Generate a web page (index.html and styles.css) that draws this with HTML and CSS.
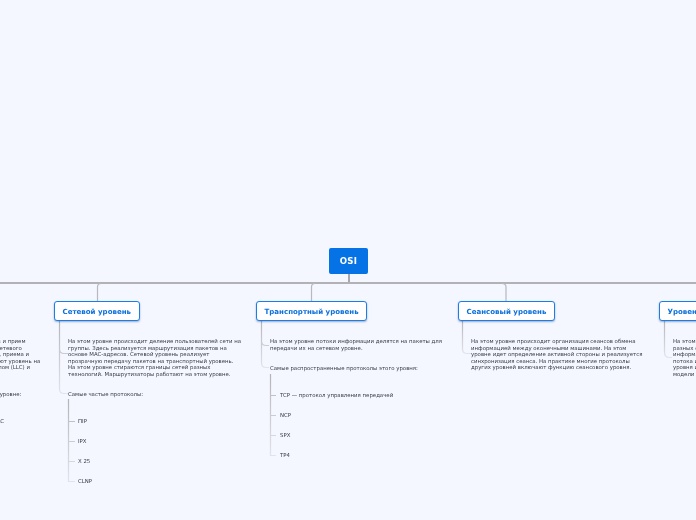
FILE: index.html
```html
<!DOCTYPE html>
<html lang="ru">
<head>
<meta charset="utf-8">
<title>OSI</title>
<link rel="stylesheet" href="styles.css">
</head>
<body>
<main class="map">
  <svg class="links" width="696" height="520" viewBox="0 0 696 520" aria-hidden="true">
    <defs>
      <linearGradient id="fade" x1="0" y1="0" x2="0" y2="1">
        <stop offset="0" stop-color="#b4b4b8"/>
        <stop offset="1" stop-color="#e2e3ea"/>
      </linearGradient>
    </defs>
    <path class="stem" d="M349 273V283"/>
    <path class="trunk" d="M0 283H696"/>
    <path class="drop" d="M97.500 301V287Q97.500 283.500 101 283.500"/>
    <path class="drop" d="M311.500 301V287Q311.500 283.500 315 283.500"/>
    <path class="drop" d="M506 301V287Q506 283.500 502 283.500"/>
    <path class="kid" d="M59.500 320V349Q59.500 353.500 64 353.500H68M59.500 320V389Q59.500 393.500 64 393.500H68"/>
    <path class="kid" d="M261.500 320V341Q261.500 345.500 266 345.500H269M261.500 320V363Q261.500 367.500 266 367.500H269"/>
    <path class="kid" d="M462.500 320V349Q462.500 353.500 467 353.500H471"/>
    <path class="kid" d="M664.500 320V352Q664.500 357.500 669 357.500H672"/>
    <path class="kid" d="M68.500 399V481.500H75M68.500 421.500H75M68.500 441.500H75M68.500 461.500H75"/>
    <path class="kid" d="M270.500 374V455.500H276M270.500 395.500H276M270.500 415.500H276M270.500 435.500H276"/>
  </svg>

  <div class="node root">OSI</div>
  <div class="node topic topic-net">Сетевой уровень</div>
  <div class="node topic topic-trans">Транспортный уровень</div>
  <div class="node topic topic-sess">Сеансовый уровень</div>
  <div class="node topic topic-pres">Уровень представления</div>

  <p class="note note-link">На этом уровне выполняется передача кадров и прием<br>кадров данных между устройствами узлами сетевого<br>уровня и физической средой для их передачи, приема и<br>Устройства данного звена передают и получают уровень на<br>на два подуровня: контроля логическим каналом (LLC) и</p>
  <p class="note note-link-2">Самые частые протоколы на этом уровне:</p>
  <p class="note note-link-3">MAC</p>

  <p class="note note-net">На этом уровне происходит деление пользователей сети на<br>группы. Здесь реализуется маршрутизация пакетов на<br>основе MAC-адресов. Сетевой уровень реализует<br>прозрачную передачу пакетов на транспортный уровень.<br>На этом уровне стираются границы сетей разных<br>технологий. Маршрутизаторы работают на этом уровне.</p>
  <p class="note note-net-2">Самые частые протоколы:</p>
  <ul class="leaves leaves-net">
    <li>ПIP</li>
    <li>IPX</li>
    <li>X 25</li>
    <li>CLNP</li>
  </ul>

  <p class="note note-trans">На этом уровне потоки информации делятся на пакеты для<br>передачи их на сетевом уровне.</p>
  <p class="note note-trans-2">Самые распространенные протоколы этого уровня:</p>
  <ul class="leaves leaves-trans">
    <li>TCP — протокол управления передачей</li>
    <li>NCP</li>
    <li>SPX</li>
    <li>TP4</li>
  </ul>

  <p class="note note-sess">На этом уровне происходит организация сеансов обмена<br>информацией между оконечными машинами. На этом<br>уровне идет определение активной стороны и реализуется<br>синхронизация сеанса. На практике многие протоколы<br>других уровней включают функцию сеансового уровня.</p>

  <p class="note note-pres">На этом уровне происходит преобразование<br>разных форматов данных,<br>информации в единый формат<br>потока и шифрование данных<br>уровня и передача их на<br>модели OSI</p>
</main>
</body>
</html>
```
FILE: styles.css
```css
html, body {
  margin: 0;
  padding: 0;
  height: 100%;
  overflow: hidden;
  background: #f4f7ff;
}
.map {
  position: relative;
  width: 696px;
  height: 520px;
  overflow: hidden;
  font-family: "DejaVu Sans", Verdana, sans-serif;
  will-change: transform;
}
.links {
  position: absolute;
  left: 0;
  top: 0;
}
.links path {
  fill: none;
}
.trunk {
  stroke: #b2b2b6;
  stroke-width: 2;
}
.stem {
  stroke: #a8a8ac;
  stroke-width: 2;
}
.drop {
  stroke: #b8b8bd;
  stroke-width: 1.2;
}
.kid {
  stroke: url(#fade);
  stroke-width: 1.2;
}
.node {
  position: absolute;
  box-sizing: border-box;
  display: flex;
  align-items: center;
  justify-content: center;
  font-weight: 700;
  white-space: nowrap;
}
.root {
  left: 329px;
  top: 248px;
  width: 39px;
  height: 26px;
  background: #0573e6;
  border-radius: 2px;
  color: #fff;
  font-size: 8.6px;
  letter-spacing: 0.2px;
}
.topic {
  top: 301px;
  height: 20px;
  padding: 0 7.5px;
  background: #fff;
  border: 1.4px solid #1a7ee8;
  border-radius: 3px;
  box-shadow: 0 1px 2px rgba(20, 60, 120, 0.4);
  color: #0b70dc;
  font-size: 7.05px;
}
.topic-net { left: 54px; }
.topic-trans { left: 256px; }
.topic-sess { left: 458px; }
.topic-pres { left: 659px; }
.note {
  position: absolute;
  margin: 0;
  color: #3a3a44;
  font-size: 5.4px;
  line-height: 6.5px;
  white-space: nowrap;
}
.note-link { left: -133px; top: 338px; }
.note-link-2 { left: -99px; top: 391px; }
.note-link-3 { left: -8px; top: 418px; }
.note-net { left: 68px; top: 338px; }
.note-net-2 { left: 68px; top: 391px; }
.note-trans { left: 270px; top: 338px; }
.note-trans-2 { left: 270px; top: 365px; }
.note-sess { left: 471px; top: 338px; }
.note-pres { left: 673px; top: 338px; }
.leaves {
  position: absolute;
  margin: 0;
  padding: 0;
  list-style: none;
  color: #3a3a44;
  font-size: 5.4px;
  white-space: nowrap;
}
.leaves li {
  height: 20px;
  line-height: 6.5px;
}
.leaves-net { left: 78px; top: 418px; }
.leaves-trans { left: 280px; top: 392px; }
```
